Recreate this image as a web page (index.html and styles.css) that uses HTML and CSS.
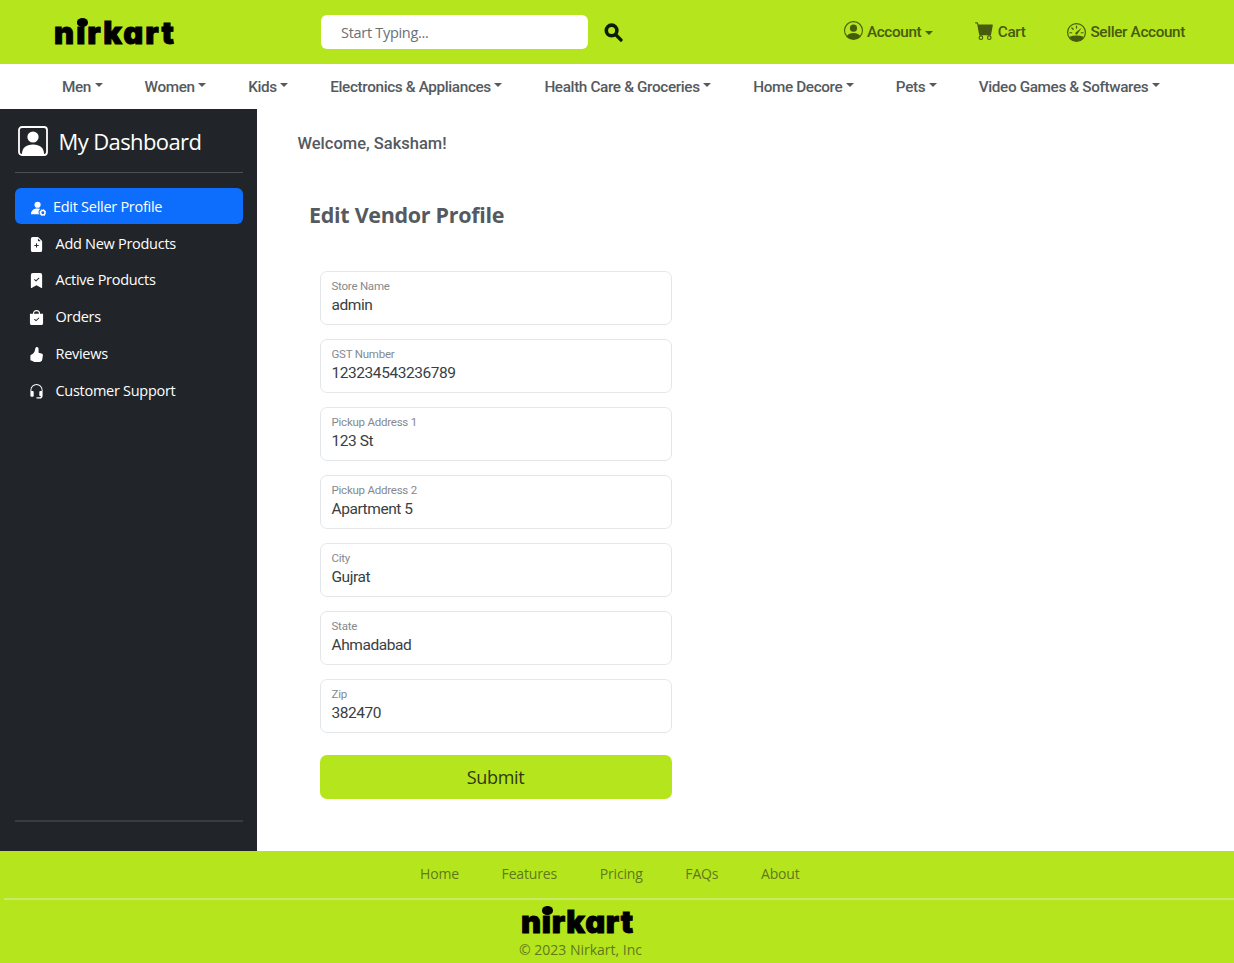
FILE: index.html
```html
<!DOCTYPE html>
<html lang="en">
<head>
<meta charset="utf-8">
<title>Nirkart - Edit Vendor Profile</title>
<link rel="stylesheet" href="styles.css">
</head>
<body>
<header class="topbar">
  <a class="logo">nirkart</a>
  <div class="search">Start Typing...</div>
  <svg class="search-icon" viewBox="0 0 19 19"><circle cx="7.6" cy="7.4" r="5.3" fill="none" stroke="currentColor" stroke-width="3.6"/><path d="M11.5 11.5L17 17" stroke="currentColor" stroke-width="3.2" stroke-linecap="round"/></svg>
  <nav class="account-nav">
    <a class="account-link"><svg class="account-icon raised" viewBox="0 0 16 16"><path d="M11 6a3 3 0 1 1-6 0 3 3 0 0 1 6 0z"/><path fill-rule="evenodd" d="M0 8a8 8 0 1 1 16 0A8 8 0 0 1 0 8zm8-7a7 7 0 0 0-5.468 11.37C3.242 11.226 4.805 10 8 10s4.757 1.225 5.468 2.37A7 7 0 0 0 8 1z"/></svg><span>Account</span><i class="caret low"></i></a>
    <a class="account-link cart"><svg class="account-icon raised" viewBox="0 0 16 16"><path d="M0 1.5A.5.5 0 0 1 .5 1H2a.5.5 0 0 1 .485.379L2.89 3H14.5a.5.5 0 0 1 .491.592l-1.5 8A.5.5 0 0 1 13 12H4a.5.5 0 0 1-.491-.408L2.01 3.607 1.61 2H.5a.5.5 0 0 1-.5-.5zM5 12a2 2 0 1 0 0 4 2 2 0 0 0 0-4zm7 0a2 2 0 1 0 0 4 2 2 0 0 0 0-4zm-7 1a1 1 0 1 1 0 2 1 1 0 0 1 0-2zm7 0a1 1 0 1 1 0 2 1 1 0 0 1 0-2z"/></svg><span>Cart</span></a>
    <a class="account-link"><svg class="account-icon" viewBox="0 0 16 16"><circle cx="8" cy="8" r="7.5" fill="none" stroke="currentColor"/><path d="M1.600 11.800Q8 9.300 14.400 11.800A7.500 7.500 0 0 1 1.600 11.800z"/><path d="M8 2.700v1.600M4.100 4.200l1.100 1.100M2.400 8.200H4M12 8.200h1.600" fill="none" stroke="currentColor" stroke-linecap="round"/><path d="M12.400 4L7.500 7.800a1 1 0 1 0 1.400 1.300z"/></svg><span>Seller Account</span></a>
  </nav>
</header>
<nav class="categories">
  <a>Men<i class="caret"></i></a>
  <a>Women<i class="caret"></i></a>
  <a>Kids<i class="caret"></i></a>
  <a>Electronics &amp; Appliances<i class="caret"></i></a>
  <a>Health Care &amp; Groceries<i class="caret"></i></a>
  <a>Home Decore<i class="caret"></i></a>
  <a>Pets<i class="caret"></i></a>
  <a>Video Games &amp; Softwares<i class="caret"></i></a>
</nav>
<div class="body-row">
  <aside class="sidebar">
    <div class="dash-title"><svg class="dash-icon" viewBox="0 0 30 30"><rect x="1" y="1" width="28" height="28" rx="3" fill="none" stroke="currentColor" stroke-width="1.8"/><circle cx="15" cy="11" r="5.6"/><path d="M4 28c0-6 4-9.500 11-9.500s11 3.500 11 9.500z"/></svg><span>My Dashboard</span></div>
    <ul class="menu">
      <li class="menu-item active"><svg class="menu-icon" viewBox="0 0 16 16"><circle cx="7" cy="4" r="3.300"/><path d="M0 14c0-4 3-6 7-6 1.300 0 2 .2 2.800.5A4.500 4.500 0 0 0 8.600 14z"/><circle cx="12.600" cy="12.500" r="2.300" fill="none" stroke="currentColor" stroke-width="1.500"/><circle cx="12.600" cy="12.500" r="3.300" fill="none" stroke="currentColor" stroke-dasharray="1.300 1.300"/></svg><span>Edit Seller Profile</span></li>
      <li class="menu-item"><svg class="menu-icon" viewBox="0 0 16 16"><path fill-rule="evenodd" d="M9.293 0H4a2 2 0 0 0-2 2v12a2 2 0 0 0 2 2h8a2 2 0 0 0 2-2V4.707A1 1 0 0 0 13.707 4L10 .293A1 1 0 0 0 9.293 0zM9.500 3.500v-2l3 3h-2a1 1 0 0 1-1-1zM8.500 7v1.500H10a.5.5 0 0 1 0 1H8.500V11a.5.5 0 0 1-1 0V9.500H6a.5.5 0 0 1 0-1h1.500V7a.5.5 0 0 1 1 0z"/></svg><span>Add New Products</span></li>
      <li class="menu-item"><svg class="menu-icon" viewBox="0 0 16 16"><path fill-rule="evenodd" d="M2 15.500V2a2 2 0 0 1 2-2h8a2 2 0 0 1 2 2v13.500a.5.5 0 0 1-.74.439L8 13.069l-5.260 2.870A.5.5 0 0 1 2 15.500zm8.854-9.646a.5.5 0 0 0-.708-.708L7.500 7.793 6.354 6.646a.5.5 0 1 0-.708.708l1.500 1.500a.5.5 0 0 0 .708 0l3-3z"/></svg><span>Active Products</span></li>
      <li class="menu-item"><svg class="menu-icon" viewBox="0 0 16 16"><path d="M4.800 5V3.800a3.200 3.200 0 0 1 6.400 0V5" fill="none" stroke="currentColor" stroke-width="1.200"/><path fill-rule="evenodd" d="M1 4h14v10a2 2 0 0 1-2 2H3a2 2 0 0 1-2-2zm9.854 4.854a.5.5 0 0 0-.708-.708L7.500 10.793 6.354 9.646a.5.5 0 1 0-.708.708l1.500 1.500a.5.5 0 0 0 .708 0l3-3z"/></svg><span>Orders</span></li>
      <li class="menu-item"><svg class="menu-icon" viewBox="0 0 16 16"><path d="M6.600 2C6.800.700 7.600 0 8.500 0 9.500 0 10.200.900 10.200 2v4.200l3 .6c1.200.3 1.800 1.200 1.600 2.300l-.7 4.600c-.2 1.300-1.300 2.300-3 2.300H7c-1.400 0-2.300-.4-3.200-1.100L1.500 14V8.700l2.600-1.500C5.700 5.800 6.300 4 6.600 2z"/></svg><span>Reviews</span></li>
      <li class="menu-item"><svg class="menu-icon" viewBox="0 0 16 16"><path d="M8 1a5.500 5.500 0 0 0-5.500 5.500V7.500H4a1 1 0 0 1 1 1v4a1 1 0 0 1-1 1H2.500a1 1 0 0 1-1-1v-6a6.500 6.500 0 1 1 13 0v6a3 3 0 0 1-3 3H8v-1.500h3.500a1.500 1.500 0 0 0 1.400-1H12a1 1 0 0 1-1-1V8.500a1 1 0 0 1 1-1h1.500v-1A5.500 5.500 0 0 0 8 1z"/></svg><span>Customer Support</span></li>
    </ul>
  </aside>
  <main class="content">
    <p class="welcome">Welcome, Saksham!</p>
    <h1 class="title">Edit Vendor Profile</h1>
    <form class="form">
      <div class="field"><label>Store Name</label><span>admin</span></div>
      <div class="field"><label>GST Number</label><span>123234543236789</span></div>
      <div class="field"><label>Pickup Address 1</label><span>123 St</span></div>
      <div class="field"><label>Pickup Address 2</label><span>Apartment 5</span></div>
      <div class="field"><label>City</label><span>Gujrat</span></div>
      <div class="field"><label>State</label><span>Ahmadabad</span></div>
      <div class="field"><label>Zip</label><span>382470</span></div>
      <button class="submit" type="button">Submit</button>
    </form>
  </main>
</div>
<footer class="footer">
  <nav class="footer-nav"><a>Home</a><a>Features</a><a>Pricing</a><a>FAQs</a><a>About</a></nav>
  <div class="footer-brand">
    <a class="logo small">nirkart</a>
    <p class="copyright">© 2023 Nirkart, Inc</p>
  </div>
</footer>
</body>
</html>
```
FILE: styles.css
```css
* { box-sizing: border-box; }
body { margin: 0; width: 1234px; height: 963px; overflow: hidden; background: #fff; color: #555a60; font-family: Roboto, sans-serif; font-size: 15.300px; }
svg { display: block; flex: none; fill: currentColor; }
p, h1, ul { margin: 0; padding: 0; }

.topbar { height: 64px; background: #b5e61d; display: flex; align-items: center; padding: 0 49px 0 54px; }
.logo { position: relative; width: 120px; margin-top: 2px; color: #000; font: 900 31px/40px Inter, sans-serif; font-feature-settings: "cv11"; letter-spacing: 2px; white-space: nowrap; -webkit-text-stroke: 0.900px #000; }
.logo::after { content: ""; position: absolute; left: 22.500px; top: 5px; width: 11px; height: 8.500px; border-radius: 50%; background: #000; }
.search { width: 267px; height: 34px; margin-left: 147px; padding-left: 20px; border-radius: 6px; background: #fff; color: #6b7075; font: 14.500px/35px "Open Sans", sans-serif; letter-spacing: -0.3px; }
.search-icon { width: 19px; height: 19px; margin-left: 15.500px; color: #0d1c02; }
.account-nav { display: flex; gap: 42px; margin-left: auto; color: #465b0c; font-weight: 500; letter-spacing: -0.36px; }
.account-link { display: flex; align-items: center; white-space: nowrap; }
.account-icon { width: 19px; height: 19px; margin-right: 4px; }
.raised { margin-bottom: 3px; }
.caret { display: inline-block; flex: none; border: 4px solid transparent; border-top-color: currentColor; border-bottom: 0; margin-left: 3.500px; vertical-align: 5px; }
.low { margin-top: 1px; }

.categories { height: 45px; display: flex; align-items: center; gap: 42px; padding-left: 62px; font-weight: 500; letter-spacing: -0.36px; white-space: nowrap; }

.body-row { display: flex; height: 742px; }
.sidebar { display: flex; flex-direction: column; width: 257px; padding: 15px 14.500px 29px; background: #212529; color: #fff; font-family: "Open Sans", sans-serif; }
.dash-title { display: flex; align-items: center; height: 49px; padding: 0 0 14px 3px; border-bottom: 1px solid #4d5154; font-size: 22px; letter-spacing: -0.600px; white-space: nowrap; }
.dash-icon { width: 30px; height: 30px; margin-right: 11px; }
.menu { flex: 1; margin-top: 14.500px; list-style: none; border-bottom: 2px solid #383c40; }
.menu-item { display: flex; align-items: center; height: 36.800px; padding: 1px 0 0 14.500px; font-size: 14.500px; letter-spacing: -0.280px; white-space: nowrap; }
.menu-icon { width: 15px; height: 15px; margin: 2px 11.500px 0 0; }
.active { border-radius: 6px; background: #0d6efd; padding-left: 16px; }
.active .menu-icon { width: 15px; height: 15px; margin: 4px 7.500px 0 0; }

.content { flex: 1; padding: 25px 0 0 40.500px; }
.welcome { font-size: 16.500px; line-height: 20px; font-weight: 500; }
.title { margin: 45px 0 0 11.500px; font: 700 21.500px/32px "Open Sans", sans-serif; letter-spacing: -0.300px; }
.form { width: 352px; margin: 40px 0 0 22px; }
.field { height: 54px; margin-bottom: 14.050px; padding: 7px 11px; border: 1px solid #e4e7e9; border-radius: 7px; }
.field label { display: block; color: #85898d; font-size: 11.500px; line-height: 14px; letter-spacing: -0.230px; }
.field span { display: block; margin-top: 1.500px; color: #3a3e42; font-size: 15.500px; line-height: 20px; letter-spacing: -0.440px; }
.submit { display: block; width: 352px; height: 44px; margin-top: 21.500px; padding: 1px 0 0; border: 0; border-radius: 7px; background: #b5e61d; color: #2c3a10; font: 18px/43px "Open Sans", sans-serif; letter-spacing: -0.300px; }

.footer { height: 112px; background: #b5e61d; color: #60791b; font: 14px/20px "Open Sans", sans-serif; }
.footer-nav { display: flex; gap: 42.600px; height: 49px; margin-left: 4px; padding: 12.500px 0 0 416px; border-bottom: 2px solid #c9ea66; letter-spacing: -0.150px; white-space: nowrap; }
.footer-brand { display: flex; flex-direction: column; width: 124px; margin-left: 519px; }
.small { width: 112px; margin: 3px 0 0 2px; line-height: 37px; letter-spacing: 0.700px; }
.small::after { left: 21px; top: 3px; }
.copyright { white-space: nowrap; }
```
